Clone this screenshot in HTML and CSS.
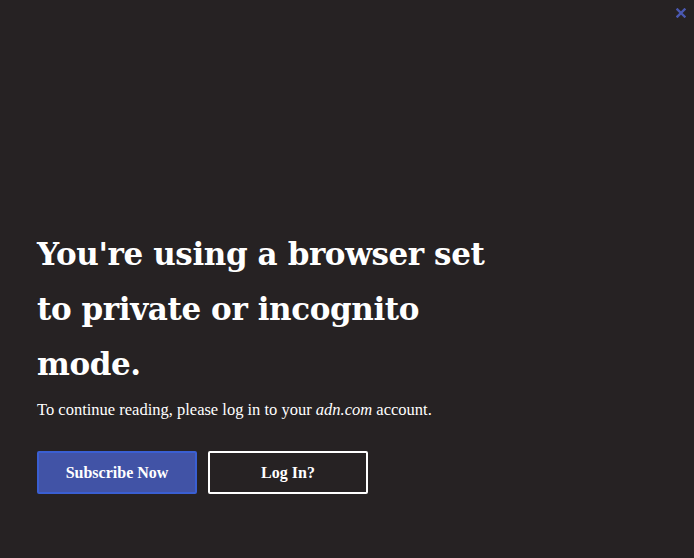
FILE: index.html
```html
<!DOCTYPE html>
<html lang="en">
<head>
    <meta charset="UTF-8">
    <meta name="viewport" content="width=device-width, initial-scale=1.0">
    <title>Private Mode</title>
    <link rel="stylesheet" href="styles.css">
</head>
<body>
    <div class="overlay">
        <button class="close-button" aria-label="Close">
            <svg width="10" height="10" viewBox="0 0 10 10">
                <path d="M1.5 1.5 L8.5 8.5 M8.5 1.5 L1.5 8.5" stroke="#4a58b0" stroke-width="2.4" stroke-linecap="square"/>
            </svg>
        </button>
        <div class="notice">
            <h1 class="title">You're using a browser set to private or incognito mode.</h1>
            <p class="message">To continue reading, please log in to your <em>adn.com</em> account.</p>
            <div class="actions">
                <button class="btn btn-subscribe">Subscribe Now</button>
                <button class="btn btn-login">Log In?</button>
            </div>
        </div>
    </div>
</body>
</html>
```

FILE: styles.css
```css
body {
    margin: 0;
    height: 100vh;
    background-color: #262223;
    font-family: 'Liberation Serif', 'DejaVu Serif', serif;
    color: #fff;
}
.overlay {
    position: relative;
    height: 100%;
    display: flex;
    flex-direction: column;
}
.close-button {
    position: absolute;
    top: 8px;
    right: 8px;
    padding: 0;
    border: none;
    background: none;
    cursor: pointer;
    line-height: 0;
}
.notice {
    padding: 227px 0 0 37px;
    width: 470px;
}
.title {
    margin: 0;
    width: 460px;
    font-family: 'DejaVu Serif', serif;
    font-size: 31px;
    line-height: 55px;
    font-weight: bold;
    letter-spacing: -0.4px;
}
.message {
    margin: 8px 0 0;
    font-size: 16.5px;
    line-height: 20px;
}
.actions {
    display: flex;
    gap: 11px;
    margin-top: 31px;
}
.btn {
    width: 160px;
    height: 43px;
    font-family: inherit;
    font-size: 16px;
    font-weight: bold;
    color: #fff;
    border-radius: 2px;
    cursor: pointer;
}
.btn-subscribe {
    background-color: #4153a6;
    border: 2px solid #3a5fd2;
}
.btn-login {
    background-color: transparent;
    border: 2px solid #fff;
}
```
